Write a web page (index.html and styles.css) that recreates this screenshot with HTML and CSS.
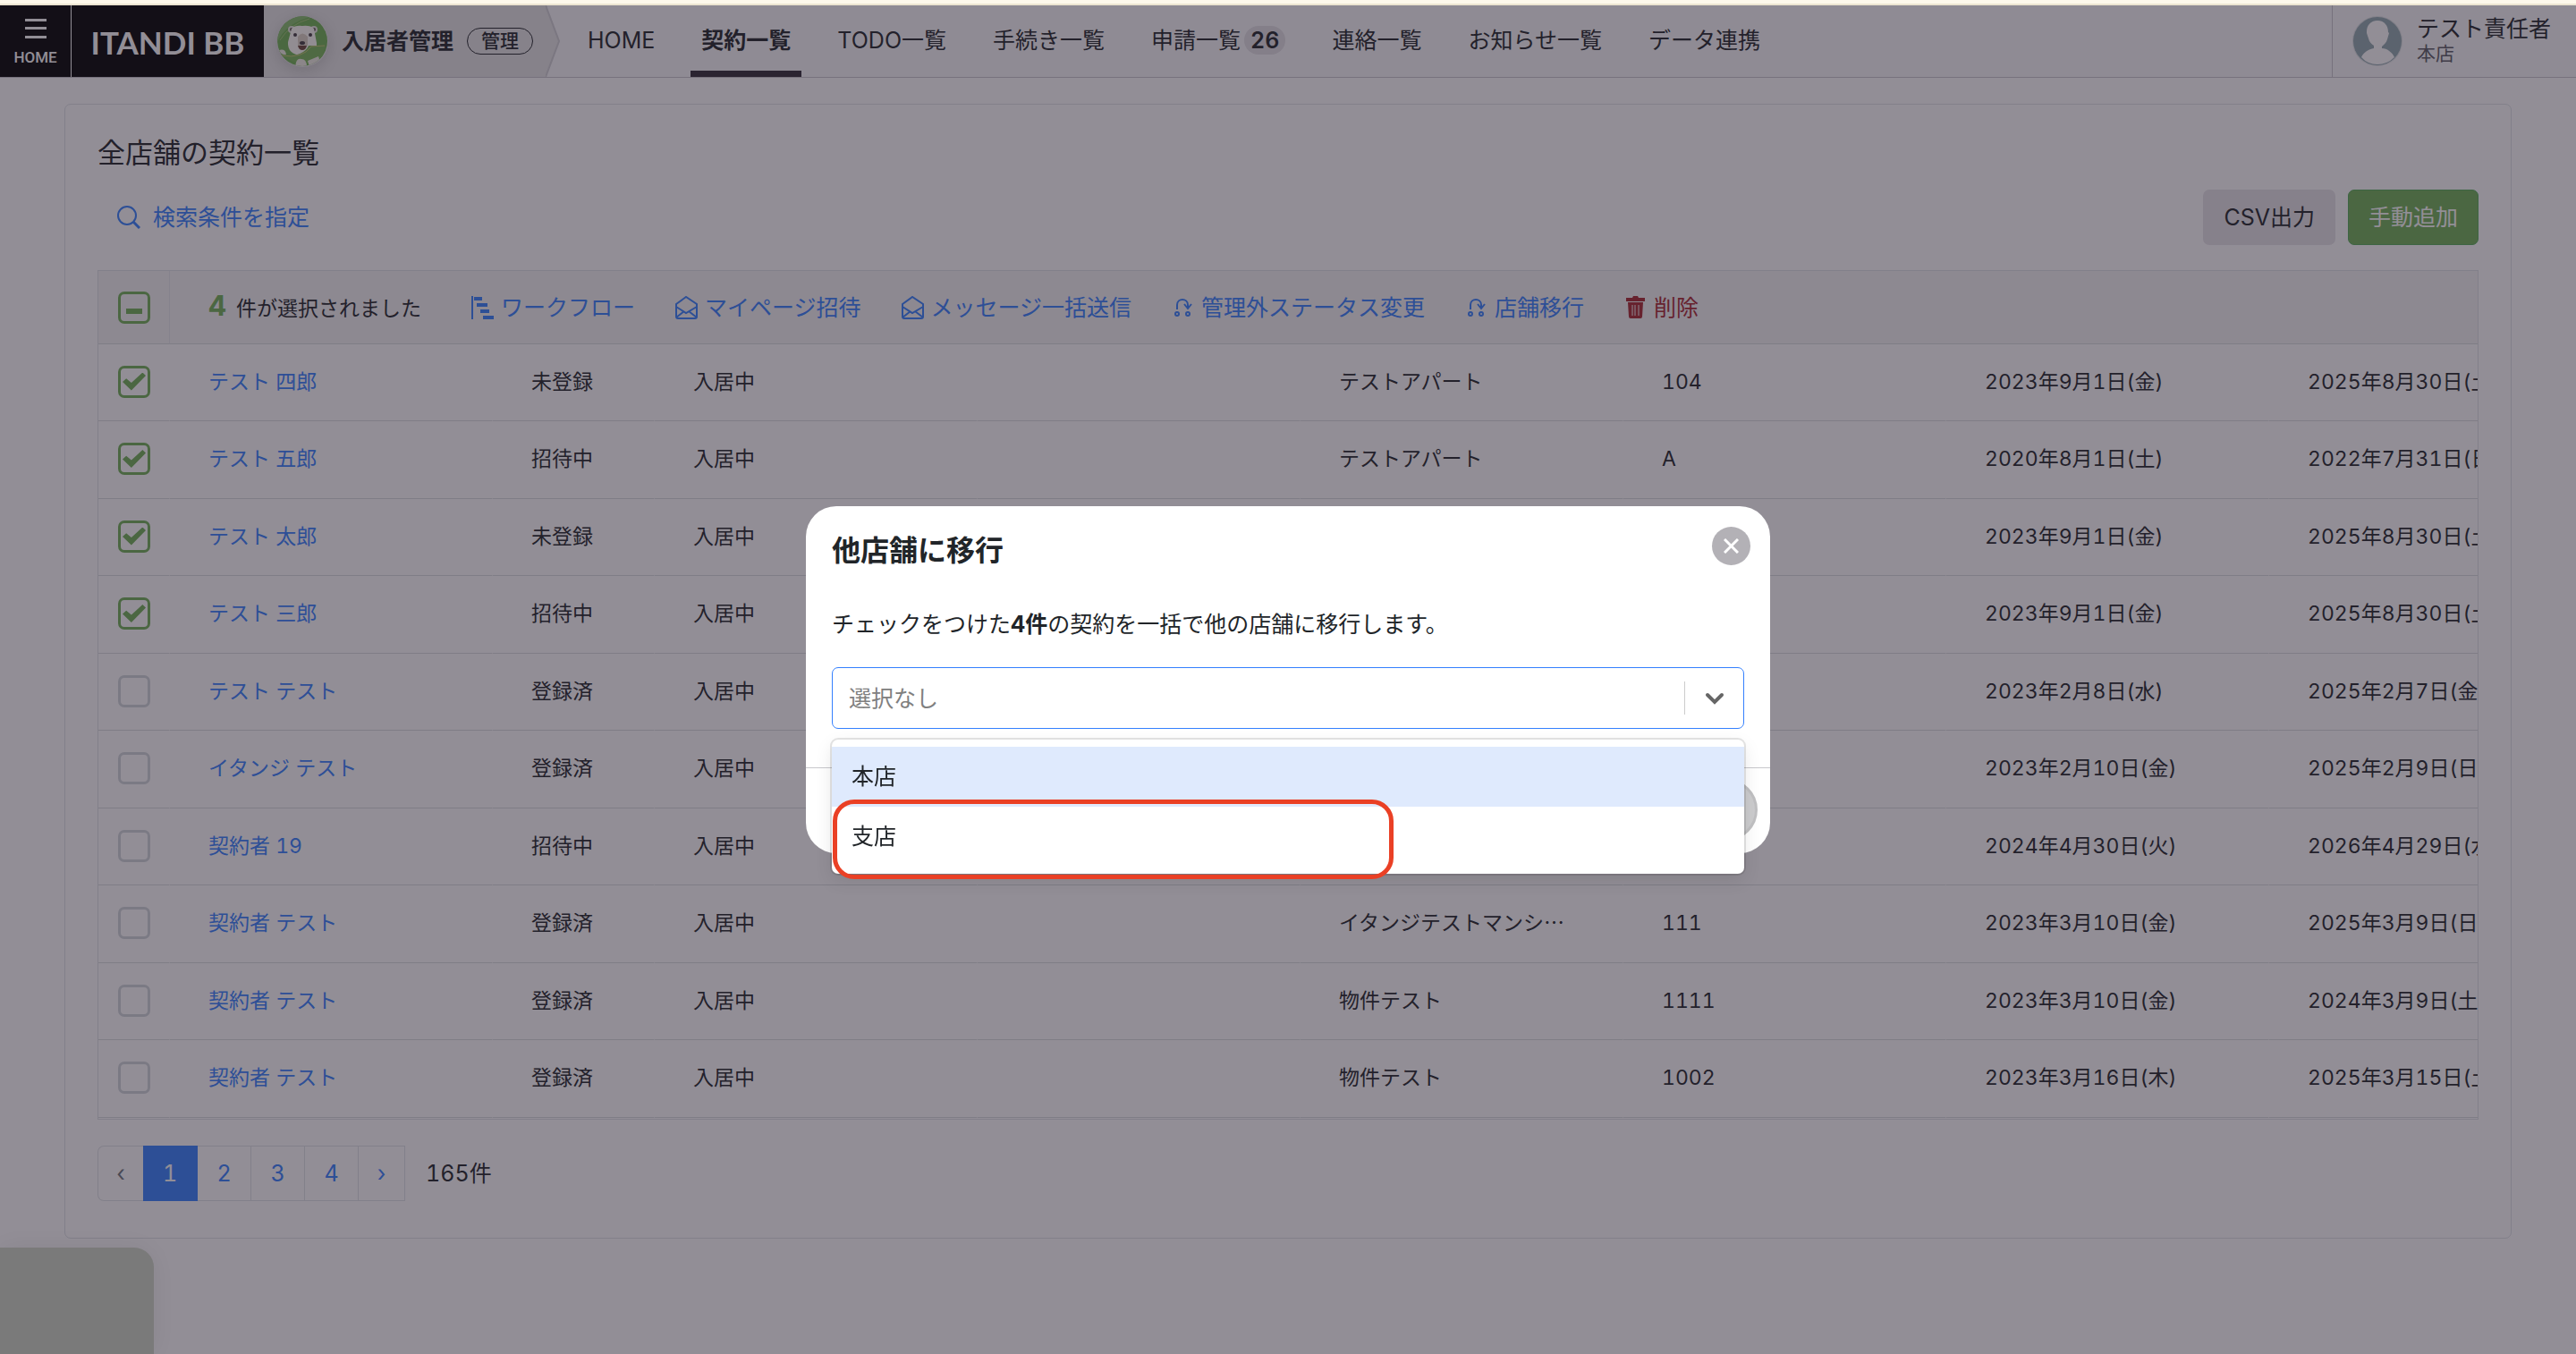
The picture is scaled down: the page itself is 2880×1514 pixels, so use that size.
FILE: index.html
```html
<!DOCTYPE html>
<html lang="ja">
<head>
    <meta charset="UTF-8">
    <title>契約一覧</title>
    <link rel="stylesheet" href="styles.css">
</head>

<body>
    <div class="top-line"></div>

    <!-- header -->
    <header class="header">
        <button class="menu-btn">
            <svg width="24" height="22" viewBox="0 0 24 22" fill="#fff"><path d="M0 0h24v3H0zM0 9h24v3H0zM0 19h24v3H0z" /></svg>
            <span>HOME</span>
        </button>
        <a href="#" class="logo">ITANDI BB</a>
        <div class="crumb">
            <svg class="bear" width="57" height="57" viewBox="0 0 57 57">
                <defs><clipPath id="round"><circle cx="28" cy="28" r="28" /></clipPath></defs>
                <g clip-path="url(#round)">
                    <rect width="57" height="57" fill="#6fb252" />
                    <path d="M0 30Q8 8 40 0H20L0 12z" fill="#86bf6c" />
                    <path d="M3 27Q14 9 36 3" stroke="#a3c878" fill="none" />
                    <circle cx="16" cy="15" r="4" fill="#e8e6e0" />
                    <circle cx="41" cy="15" r="4" fill="#e8e6e0" />
                    <circle cx="16" cy="15" r="2" fill="#5d5550" />
                    <circle cx="41" cy="15" r="2" fill="#5d5550" />
                    <path d="M16 14Q20 10 28 11Q37 10 41 14L44 30Q45 44 28 44Q11 43 12 29z" fill="#fffdf6" />
                    <path d="M23 23Q28 16 34 23V33H23z" fill="#ddd3c4" />
                    <circle cx="20" cy="21" r="2" fill="#433c40" />
                    <circle cx="37" cy="21" r="2" fill="#433c40" />
                    <ellipse cx="28" cy="30" rx="3" ry="2" fill="#433c40" />
                    <path d="M23 33H33Q32 38 28 38Q24 38 23 33z" fill="#6b4438" />
                    <path d="M35 33H54L50 46Q30 60 6 45Q30 45 35 33z" fill="#79b758" />
                    <path d="M2 38Q9 36 10 43Q4 44 2 38zM20 57Q21 46 27 48Q33 48 33 57zM34 50L46 45L50 57H36z" fill="#f1eee4" />
                    <path d="M5 44Q28 48 38 34L53 33" stroke="#c4c873" fill="none" />
                </g>
            </svg>
            <strong>入居者管理</strong>
            <span class="tag">管理</span>
        </div>
        <svg class="crumb-arrow" width="16" height="80" viewBox="0 0 16 80"><path d="M0 0L15 40L0 80z" fill="#e6e6e6" /><path d="M0 0L15 40L0 80" fill="none" stroke="#d0d0d4" stroke-width="2" /></svg>
        <nav class="nav">
            <a href="#">HOME</a>
            <a href="#" class="active">契約一覧</a>
            <a href="#">TODO一覧</a>
            <a href="#">手続き一覧</a>
            <a href="#">申請一覧<span class="count">26</span></a>
            <a href="#">連絡一覧</a>
            <a href="#">お知らせ一覧</a>
            <a href="#">データ連携</a>
        </nav>
        <div class="user">
            <svg width="57" height="57" viewBox="0 0 57 57">
                <circle cx="28" cy="28" r="28" fill="#dfe3e5" />
                <circle cx="28" cy="28" r="27" fill="#90a8ae" />
                <path d="M28 5C36 5 40 11 40 18L41 19L39 26C38 30 35 32 33 34V36C39 36 45 41 47 46Q39 54 28 54Q17 54 10 46C12 41 18 37 24 36V33C21 31 19 29 18 25L16 19V17C16 11 20 5 28 5z" fill="#fff" />
            </svg>
            <div class="user-text">
                <p class="user-name">テスト責任者</p>
                <p class="user-shop">本店</p>
            </div>
        </div>
    </header>

    <!-- contract list -->
    <main class="card">
        <h1>全店舗の契約一覧</h1>
        <div class="toolbar">
            <a href="#" class="search-link">
                <svg width="26" height="26" viewBox="0 0 26 26" fill="none" stroke="#3480fe"><circle cx="11" cy="11" r="10" stroke-width="2" /><path d="M18 18L25 25" stroke-width="3" /></svg>
                検索条件を指定
            </a>
            <div class="buttons">
                <button class="btn btn-gray">CSV出力</button>
                <button class="btn btn-green">手動追加</button>
            </div>
        </div>

        <div class="table-wrap">
            <table>
                <colgroup>
                    <col class="col-check">
                    <col>
                    <col class="col-status">
                    <col>
                    <col>
                    <col>
                    <col>
                    <col>
                    <col>
                </colgroup>
                <thead>
                    <tr>
                        <th><input type="checkbox" class="some" aria-label="全て選択"></th>
                        <th colspan="8">
                            <div class="actions">
                                <p class="selected"><b>4</b>件が選択されました</p>
                                <a href="#"><svg width="25" height="26" viewBox="0 0 25 26" fill="#3480fe"><path d="M0 0h2v26H0zM3 1h9v4H3zM6 8h12v4H6zM10 15h10v4H10zM13 22h12v4H13z" /></svg>ワークフロー</a>
                                <a href="#"><svg width="25" height="26" viewBox="0 0 25 26" fill="none" stroke="#3480fe" stroke-width="2"><path d="M1 9L12 1L24 9V23Q24 25 22 25H3Q1 25 1 23zM1 12L12 19L24 12M1 24L10 17M24 24L15 17" /></svg>マイページ招待</a>
                                <a href="#"><svg width="25" height="26" viewBox="0 0 25 26" fill="none" stroke="#3480fe" stroke-width="2"><path d="M1 9L12 1L24 9V23Q24 25 22 25H3Q1 25 1 23zM1 12L12 19L24 12M1 24L10 17M24 24L15 17" /></svg>メッセージ一括送信</a>
                                <a href="#"><svg width="25" height="26" viewBox="0 0 25 26" fill="none" stroke="#3480fe" stroke-width="2"><circle cx="6" cy="20" r="2" /><circle cx="18" cy="20" r="2" /><path d="M6 15V10C6 2 18 2 18 10V13" /><path d="M14 9L18 14L22 9" /></svg>管理外ステータス変更</a>
                                <a href="#"><svg width="25" height="26" viewBox="0 0 25 26" fill="none" stroke="#3480fe" stroke-width="2"><circle cx="6" cy="20" r="2" /><circle cx="18" cy="20" r="2" /><path d="M6 15V10C6 2 18 2 18 10V13" /><path d="M14 9L18 14L22 9" /></svg>店舗移行</a>
                                <a href="#" class="delete"><svg width="25" height="26" viewBox="0 0 25 26"><path d="M2 2h7l1-2h5l1 2h7v4H2zM4 7h17l-1 16q0 2-2 2H7q-2 0-2-2z" fill="#a8262f" /><path d="M9 10v12M12 10v12M16 10v12" stroke="#f4f4f5" /></svg>削除</a>
                            </div>
                        </th>
                    </tr>
                </thead>
                <tbody>
                    <tr>
                        <td><input type="checkbox" aria-label="テスト 四郎" checked></td>
                        <td><a href="#">テスト 四郎</a></td>
                        <td>未登録</td>
                        <td>入居中</td>
                        <td></td>
                        <td>テストアパート</td>
                        <td>104</td>
                        <td>2023年9月1日(金)</td>
                        <td>2025年8月30日(土)</td>
                    </tr>
                    <tr>
                        <td><input type="checkbox" aria-label="テスト 五郎" checked></td>
                        <td><a href="#">テスト 五郎</a></td>
                        <td>招待中</td>
                        <td>入居中</td>
                        <td></td>
                        <td>テストアパート</td>
                        <td>A</td>
                        <td>2020年8月1日(土)</td>
                        <td>2022年7月31日(日)</td>
                    </tr>
                    <tr>
                        <td><input type="checkbox" aria-label="テスト 太郎" checked></td>
                        <td><a href="#">テスト 太郎</a></td>
                        <td>未登録</td>
                        <td>入居中</td>
                        <td></td>
                        <td></td>
                        <td></td>
                        <td>2023年9月1日(金)</td>
                        <td>2025年8月30日(土)</td>
                    </tr>
                    <tr>
                        <td><input type="checkbox" aria-label="テスト 三郎" checked></td>
                        <td><a href="#">テスト 三郎</a></td>
                        <td>招待中</td>
                        <td>入居中</td>
                        <td></td>
                        <td></td>
                        <td></td>
                        <td>2023年9月1日(金)</td>
                        <td>2025年8月30日(土)</td>
                    </tr>
                    <tr>
                        <td><input type="checkbox" aria-label="テスト テスト"></td>
                        <td><a href="#">テスト テスト</a></td>
                        <td>登録済</td>
                        <td>入居中</td>
                        <td></td>
                        <td></td>
                        <td></td>
                        <td>2023年2月8日(水)</td>
                        <td>2025年2月7日(金)</td>
                    </tr>
                    <tr>
                        <td><input type="checkbox" aria-label="イタンジ テスト"></td>
                        <td><a href="#">イタンジ テスト</a></td>
                        <td>登録済</td>
                        <td>入居中</td>
                        <td></td>
                        <td></td>
                        <td></td>
                        <td>2023年2月10日(金)</td>
                        <td>2025年2月9日(日)</td>
                    </tr>
                    <tr>
                        <td><input type="checkbox" aria-label="契約者 19"></td>
                        <td><a href="#">契約者 19</a></td>
                        <td>招待中</td>
                        <td>入居中</td>
                        <td></td>
                        <td></td>
                        <td></td>
                        <td>2024年4月30日(火)</td>
                        <td>2026年4月29日(水)</td>
                    </tr>
                    <tr>
                        <td><input type="checkbox" aria-label="契約者 テスト"></td>
                        <td><a href="#">契約者 テスト</a></td>
                        <td>登録済</td>
                        <td>入居中</td>
                        <td></td>
                        <td>イタンジテストマンシ<span class="dots">…</span></td>
                        <td>111</td>
                        <td>2023年3月10日(金)</td>
                        <td>2025年3月9日(日)</td>
                    </tr>
                    <tr>
                        <td><input type="checkbox" aria-label="契約者 テスト"></td>
                        <td><a href="#">契約者 テスト</a></td>
                        <td>登録済</td>
                        <td>入居中</td>
                        <td></td>
                        <td>物件テスト</td>
                        <td>1111</td>
                        <td>2023年3月10日(金)</td>
                        <td>2024年3月9日(土)</td>
                    </tr>
                    <tr>
                        <td><input type="checkbox" aria-label="契約者 テスト"></td>
                        <td><a href="#">契約者 テスト</a></td>
                        <td>登録済</td>
                        <td>入居中</td>
                        <td></td>
                        <td>物件テスト</td>
                        <td>1002</td>
                        <td>2023年3月16日(木)</td>
                        <td>2025年3月15日(土)</td>
                    </tr>
                </tbody>
            </table>
        </div>

        <div class="pager">
            <ul>
                <li><a href="#" class="prev">‹</a></li>
                <li><a href="#" class="current">1</a></li>
                <li><a href="#">2</a></li>
                <li><a href="#">3</a></li>
                <li><a href="#">4</a></li>
                <li><a href="#" class="next">›</a></li>
            </ul>
            <p>165件</p>
        </div>
    </main>

    <div class="corner-box"></div>

    <!-- modal -->
    <div class="overlay">
        <div class="modal" role="dialog" aria-labelledby="modal-title">
            <div class="modal-header">
                <h2 id="modal-title">他店舗に移行</h2>
                <button class="close" aria-label="閉じる">
                    <svg width="17" height="17" viewBox="0 0 17 17" stroke="#fff" stroke-width="3"><path d="M1 1L16 16M16 1L1 16" /></svg>
                </button>
            </div>
            <div class="modal-body">
                <label for="shop">チェックをつけた<b>4件</b>の契約を一括で他の店舗に移行します。</label>
                <div class="select-box">
                    <select id="shop">
                        <option>選択なし</option>
                    </select>
                    <span class="arrow">
                        <svg width="22" height="14" viewBox="0 0 22 14" fill="none" stroke="#666" stroke-width="4" stroke-linecap="round"><path d="M3 3L11 11L19 3" /></svg>
                    </span>
                    <ul class="options">
                        <li class="focus">本店</li>
                        <li>支店<span class="mark"></span></li>
                    </ul>
                </div>
            </div>
            <div class="modal-footer">
                <button class="submit" aria-label="移行" disabled></button>
            </div>
        </div>
    </div>
</body>

</html>
```
FILE: styles.css
```css
* {
    margin: 0;
    padding: 0;
    box-sizing: border-box;
}

body {
    min-height: 100vh;
    font-family: Inter, "Noto Sans CJK JP", sans-serif;
    font-size: 25px;
    font-variant-numeric: tabular-nums;
    line-height: 38px;
    color: #212529;
    background-color: #fff;
}

a {
    color: #3480fe;
    text-decoration: none;
}

ul {
    list-style: none;
}

button,
select {
    font: inherit;
    border: none;
}

svg {
    display: block;
    flex: none;
}

.top-line {
    height: 6px;
    background-color: #fdf8eb;
    border-bottom: 2px solid #ece4d1;
}

/* header */
.header {
    display: flex;
    height: 81px;
    background-color: #f8f9fa;
    border-bottom: 1px solid #c8c6cc;
}

.menu-btn {
    display: flex;
    flex-direction: column;
    align-items: center;
    gap: 12px;
    width: 80px;
    height: 80px;
    padding-top: 15px;
    background-color: #000;
    border-right: 1px solid #fff;
    color: #fff;
    font-family: Roboto, sans-serif;
    font-size: 17px;
    font-weight: 500;
    line-height: 18px;
}

.logo {
    width: 215px;
    height: 80px;
    background-color: #000;
    color: #fff;
    font-family: Lato, sans-serif;
    font-size: 35px;
    font-weight: bold;
    line-height: 82px;
    text-align: center;
}

.crumb {
    display: flex;
    align-items: center;
    height: 80px;
    padding: 0 14px 0 15px;
    background-color: #e6e6e6;
}

.bear {
    border-radius: 50%;
    box-shadow: 0 4px 16px rgba(0, 0, 0, 0.15);
}

.crumb strong {
    margin: 0 15px;
}

.tag {
    padding: 0 15px;
    border: 1px solid #212529;
    border-radius: 16px;
    font-size: 21px;
    font-weight: 500;
    line-height: 28px;
}

.nav {
    display: flex;
    flex: 1;
    gap: 28px;
    margin-left: 19px;
}

.nav a {
    height: 80px;
    padding: 0 12px;
    line-height: 79px;
    color: #212529;
    white-space: nowrap;
}

.nav .active {
    font-weight: bold;
    border-bottom: 7px solid #302a34;
}

.count {
    margin-left: 4px;
    padding: 1px 7px;
    border-radius: 16px;
    background-color: #e2e0e4;
    font-size: 25px;
    font-weight: 600;
}

.user {
    display: flex;
    align-items: center;
    gap: 15px;
    padding: 0 28px 0 22px;
    border-left: 1px solid #c8c6cc;
}

.user-text {
    padding-bottom: 4px;
}

.user-name {
    line-height: 30px;
}

.user-shop {
    font-size: 21px;
    line-height: 25px;
    color: #5a5a62;
}

/* card */
.card {
    margin: 29px 72px;
    padding: 30px 36px 41px;
    border: 1px solid #dee2e6;
    border-radius: 7px;
}

h1 {
    font-size: 31px;
    font-weight: normal;
    line-height: 48px;
}

.toolbar {
    display: flex;
    align-items: center;
    justify-content: space-between;
    margin: 17px 0 28px;
}

.search-link {
    display: flex;
    align-items: center;
    gap: 14px;
    margin-left: 22px;
}

.buttons {
    display: flex;
    gap: 14px;
}

.btn {
    height: 62px;
    padding: 0 23px;
    border-radius: 7px;
}

.btn-gray {
    background-color: #e6e4e8;
    color: #212529;
}

.btn-green {
    padding: 0 22px;
    background-color: #70b056;
    border: 1px solid #54ac58;
    color: #fff;
}

/* table */
.table-wrap {
    overflow: hidden;
    padding-bottom: 1px;
    border: 1px solid #dee2e6;
}

table {
    width: 2788px;
    table-layout: fixed;
    border-spacing: 0;
    font-size: 23px;
}

.col-check {
    width: 80px;
}

.col-status {
    width: 181px;
}

th {
    height: 82px;
    background-color: #f4f4f5;
    border-bottom: 1px solid #d8dcde;
    border-right: 1px solid #e4e6ea;
    font-weight: normal;
    text-align: left;
}

td {
    height: 86px;
    padding: 0 0 2px 43px;
    border-bottom: 1px solid #d8dcde;
    border-right: 1px solid #fff;
    white-space: nowrap;
}

tr:nth-child(even) td {
    height: 87px;
}

th:first-child,
td:first-child {
    padding-left: 22px;
}

th:last-child {
    padding-left: 43px;
}

.dots {
    font-family: "Noto Sans CJK JP", sans-serif;
    line-height: 1;
}

.actions {
    display: flex;
    align-items: center;
    gap: 45px;
    font-size: 25px;
}

.actions a {
    display: flex;
    align-items: center;
    gap: 8px;
}

.actions .delete {
    color: #a8262f;
}

.selected {
    width: 249px;
    font-size: 23px;
    white-space: nowrap;
}

.selected b {
    margin-right: 11px;
    font-size: 31px;
    color: #70b056;
}

input[type="checkbox"] {
    display: grid;
    place-items: center;
    width: 36px;
    height: 36px;
    appearance: none;
    border: 3px solid #d0d6da;
    border-radius: 7px;
}

input[type="checkbox"]:checked,
input[type="checkbox"].some {
    border-color: #70b056;
}

input:checked::before {
    content: "";
    width: 26px;
    height: 20px;
    background-color: #70b056;
    clip-path: polygon(0 52%, 16% 34%, 38% 58%, 86% 0, 100% 18%, 38% 100%);
}

input.some::before {
    content: "";
    width: 18px;
    height: 6px;
    margin-top: 8px;
    background-color: #70b056;
}

/* pager */
.pager {
    display: flex;
    align-items: center;
    gap: 23px;
    margin-top: 29px;
}

.pager ul {
    display: flex;
}

.pager a {
    display: block;
    width: 60px;
    height: 62px;
    border: 1px solid #dee2e6;
    border-left: none;
    line-height: 60px;
    text-align: center;
}

.pager .prev {
    width: 51px;
    border-left: 1px solid #dee2e6;
    border-right: none;
    border-radius: 7px 0 0 7px;
    color: #6c757d;
}

.pager .next {
    width: 52px;
}

.pager .current {
    width: 61px;
    background-color: #3480fe;
    border-color: #3480fe;
    color: #fff;
}

.corner-box {
    position: fixed;
    left: 0;
    bottom: 0;
    width: 172px;
    height: 119px;
    border-top-right-radius: 22px;
    background-color: #ced6c6;
    box-shadow: 0 0 30px rgba(0, 0, 0, 0.08);
}

/* modal */
.overlay {
    position: fixed;
    top: 6px;
    left: 0;
    right: 0;
    bottom: 0;
    display: flex;
    align-items: center;
    justify-content: center;
    background-color: rgba(38, 30, 46, 0.5);
}

.modal {
    width: 1078px;
    border-radius: 34px;
    background-color: #fff;
}

.modal-header {
    display: flex;
    align-items: flex-start;
    justify-content: space-between;
    padding: 23px 22px 0 29px;
}

h2 {
    font-size: 32px;
    line-height: 54px;
}

.close {
    display: grid;
    place-items: center;
    width: 43px;
    height: 43px;
    border-radius: 50%;
    background-color: #b3b1b6;
}

.modal-body {
    padding: 36px 29px 43px;
}

.modal-body label {
    display: block;
    margin-bottom: 29px;
}

.select-box {
    position: relative;
}

select {
    display: block;
    width: 100%;
    height: 69px;
    padding: 0 18px;
    appearance: none;
    border: 1px solid #3480fe;
    border-radius: 7px;
    background-color: #fff;
    color: #808080;
}

.arrow {
    position: absolute;
    top: 16px;
    right: 1px;
    display: grid;
    place-items: center;
    width: 66px;
    height: 37px;
    border-left: 1px solid #ccc;
    pointer-events: none;
}

.options {
    position: absolute;
    top: 81px;
    left: 0;
    right: 0;
    padding: 8px 0;
    border-radius: 7px;
    background-color: #fff;
    box-shadow: 0 0 0 2px rgba(0, 0, 0, 0.1), 0 7px 20px rgba(0, 0, 0, 0.1);
}

.options li {
    position: relative;
    padding: 0 22px;
    line-height: 67px;
}

.options .focus {
    background-color: #dfeafd;
}

.mark {
    position: absolute;
    top: -8px;
    left: 1px;
    width: 627px;
    height: 89px;
    border: 5px solid #ea4025;
    border-radius: 24px;
}

.modal-footer {
    display: flex;
    justify-content: flex-end;
    padding: 12px 14px 14px;
    border-top: 1px solid #c8c8cc;
}

.submit {
    width: 150px;
    height: 69px;
    border: 3px solid #c0c0c2;
    border-radius: 35px;
    background-color: #ccccce;
}
```
